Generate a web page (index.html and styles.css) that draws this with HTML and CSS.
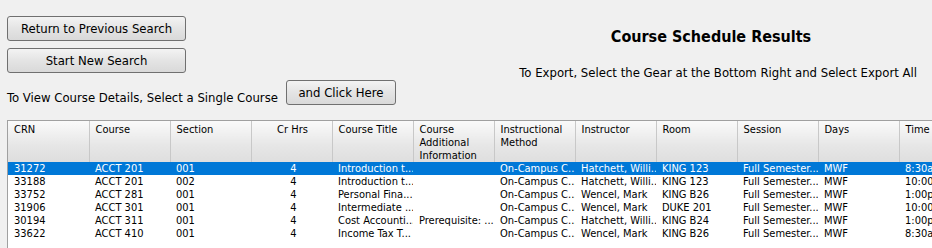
FILE: index.html
```html
<!DOCTYPE html>
<html>
<head>
<meta charset="utf-8">
<link rel="stylesheet" href="styles.css">
</head>
<body>
<div class="page">
  <div class="top">
    <div class="actions">
      <button class="btn btn-wide">Return to Previous Search</button>
      <button class="btn btn-wide">Start New Search</button>
      <div class="details">
        <span class="details-text">To View Course Details, Select a Single Course</span>
        <button class="btn btn-small">and Click Here</button>
      </div>
    </div>
    <div class="heading">
      <h1 class="title">Course Schedule Results</h1>
      <p class="export">To Export, Select the Gear at the Bottom Right and Select Export All</p>
    </div>
  </div>
  <div class="grid">
    <table class="results">
      <colgroup>
        <col><col><col><col><col><col><col><col><col><col><col><col>
      </colgroup>
      <thead>
        <tr>
          <th>CRN</th>
          <th>Course</th>
          <th>Section</th>
          <th class="center">Cr Hrs</th>
          <th>Course Title</th>
          <th>Course Additional Information</th>
          <th>Instructional Method</th>
          <th>Instructor</th>
          <th>Room</th>
          <th>Session</th>
          <th>Days</th>
          <th>Time</th>
        </tr>
      </thead>
      <tbody>
        <tr class="selected">
          <td>31272</td><td>ACCT 201</td><td>001</td><td class="center">4</td><td>Introduction t...</td><td></td><td>On-Campus C...</td><td>Hatchett, Willi...</td><td>KING 123</td><td>Full Semester...</td><td>MWF</td><td>8:30am-9:45am</td>
        </tr>
        <tr>
          <td>33188</td><td>ACCT 201</td><td>002</td><td class="center">4</td><td>Introduction t...</td><td></td><td>On-Campus C...</td><td>Hatchett, Willi...</td><td>KING 123</td><td>Full Semester...</td><td>MWF</td><td>10:00am-11:15am</td>
        </tr>
        <tr>
          <td>33752</td><td>ACCT 281</td><td>001</td><td class="center">4</td><td>Personal Fina...</td><td></td><td>On-Campus C...</td><td>Wencel, Mark</td><td>KING B26</td><td>Full Semester...</td><td>MWF</td><td>1:00pm-2:15pm</td>
        </tr>
        <tr>
          <td>31906</td><td>ACCT 301</td><td>001</td><td class="center">4</td><td>Intermediate ...</td><td></td><td>On-Campus C...</td><td>Wencel, Mark</td><td>DUKE 201</td><td>Full Semester...</td><td>MWF</td><td>10:00am-11:15am</td>
        </tr>
        <tr>
          <td>30194</td><td>ACCT 311</td><td>001</td><td class="center">4</td><td>Cost Accounti...</td><td>Prerequisite: ...</td><td>On-Campus C...</td><td>Hatchett, Willi...</td><td>KING B24</td><td>Full Semester...</td><td>MWF</td><td>1:00pm-2:15pm</td>
        </tr>
        <tr>
          <td>33622</td><td>ACCT 410</td><td>001</td><td class="center">4</td><td>Income Tax T...</td><td></td><td>On-Campus C...</td><td>Wencel, Mark</td><td>KING B26</td><td>Full Semester...</td><td>MWF</td><td>8:30am-9:45am</td>
        </tr>
      </tbody>
    </table>
  </div>
</div>
</body>
</html>
```
FILE: styles.css
```css
html, body {
  margin: 0;
  padding: 0;
  background: #f0f0f0;
  overflow: hidden;
}
body {
  font-family: "DejaVu Sans Condensed", "DejaVu Sans", sans-serif;
  font-size: 13px;
  color: #000;
  width: 932px;
  height: 248px;
}
.page {
  display: flex;
  flex-direction: column;
}
.top {
  display: flex;
  height: 120px;
}
.actions {
  width: 480px;
  padding: 16px 0 0 7px;
  display: flex;
  flex-direction: column;
  align-items: flex-start;
}
.btn {
  font-family: inherit;
  font-size: 13px;
  color: #000;
  border: 1px solid #707070;
  border-radius: 3px;
  background: linear-gradient(#f3f3f3, #e4e4e4 50%, #d9d9d9);
  padding: 0;
  margin: 0;
}
.btn-wide {
  width: 179px;
  height: 25px;
  margin-bottom: 7px;
}
.details {
  display: flex;
  align-items: flex-end;
}
.details-text {
  line-height: 15px;
}
.btn-small {
  width: 110px;
  height: 25px;
  margin-left: 8px;
}
.heading {
  flex: 1;
  display: flex;
  flex-direction: column;
}
.title {
  margin: 27px 0 0 0;
  font-size: 16px;
  font-weight: bold;
  text-align: center;
  padding-left: 3px;
}
.export {
  margin: 19px 15px 0 0;
  text-align: right;
}
.grid {
  margin-left: 7px;
  border-left: 1px solid #a0a0a0;
  border-top: 1px solid #a0a0a0;
  background: #fff;
  height: 128px;
  overflow: hidden;
}
.results {
  border-collapse: collapse;
  table-layout: fixed;
  width: 972px;
  font-size: 11px;
}
.results col {
  width: 81px;
}
.results th {
  height: 40px;
  vertical-align: top;
  text-align: left;
  font-weight: normal;
  padding: 2px 4px 0 6px;
  line-height: 13px;
  box-sizing: border-box;
  background: linear-gradient(#fafafa, #e6e6e6 60%, #dedede);
  border-right: 1px solid #c8c8c8;
}
.results th.center,
.results td.center {
  text-align: center;
}
.results td {
  height: 13px;
  padding: 0 2px 0 6px;
  line-height: 13px;
  white-space: nowrap;
  overflow: hidden;
}
.results tr.selected td {
  background: #0078d7;
  color: #fff;
}
```
